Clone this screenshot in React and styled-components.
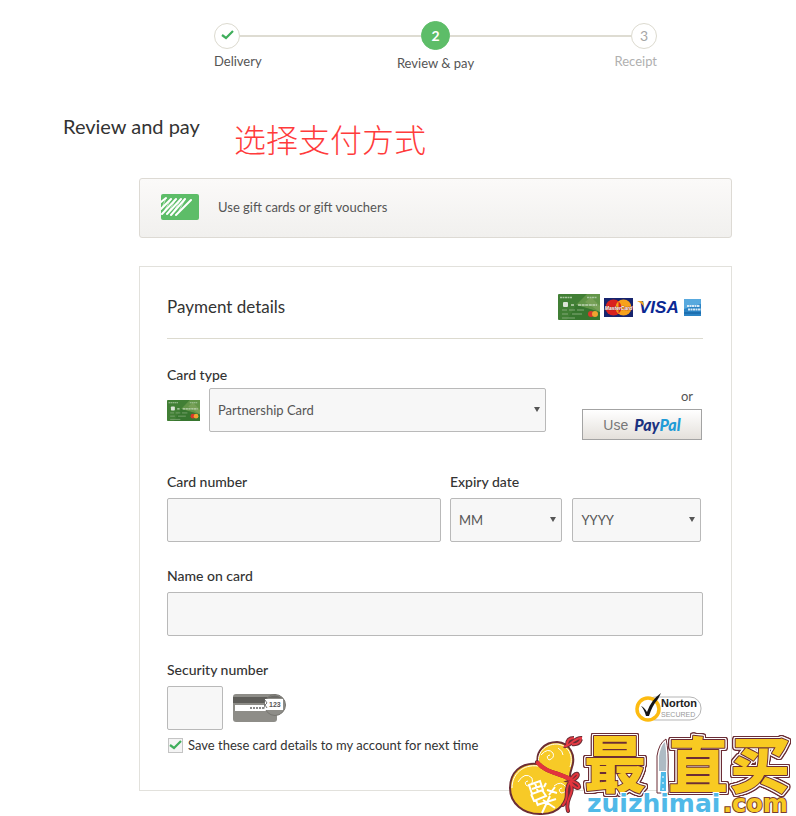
import { useState } from 'react';
import styled, { createGlobalStyle } from 'styled-components';

const GlobalStyle = createGlobalStyle`
    * {
        box-sizing: border-box;
    }
    body {
        margin: 0;
        background: #fff;
        color: #333;
        font-family: Lato, 'Noto Sans CJK SC', sans-serif;
        font-size: 13px;
        line-height: 20px;
    }
`;

const Page = styled.div`
    position: relative;
    padding: 21px 64px 25px 63px;
    overflow: hidden;
`;

const Column = styled.div`
    margin-left: 76px;
`;

const Progress = styled.nav`
    padding: 0 75px;
`;

const Track = styled.div`
    display: flex;
    align-items: center;
`;

const Line = styled.span`
    flex: 1;
    height: 2px;
    background: #dedcd2;
`;

const StepCircle = styled.span`
    display: flex;
    align-items: center;
    justify-content: center;
    width: ${(props) => (props.$active ? '29px' : '26px')};
    height: ${(props) => (props.$active ? '29px' : '26px')};
    border: 1px solid ${(props) => (props.$active ? '#5dbd68' : '#dcdacf')};
    border-radius: 50%;
    background: ${(props) => (props.$active ? '#5dbd68' : '#fff')};
    color: ${(props) => (props.$active ? '#fff' : '#a6a6a6')};
    font-size: 14px;
    font-weight: ${(props) => (props.$active ? 700 : 400)};
`;

const StepLabels = styled.ol`
    display: grid;
    grid-template-columns: 1fr auto 1fr;
    margin: 1px 0 0;
    padding: 0;
    list-style: none;
    color: #555;
`;

const StepLabel = styled.li`
    text-align: ${(props) => props.$align};
    padding-top: ${(props) => (props.$active ? '2px' : '0')};
    color: ${(props) => (props.$muted ? '#b0b0b0' : '#555')};
`;

const TitleRow = styled.div`
    display: flex;
    align-items: flex-start;
    gap: 34px;
    margin: 38px 0 16px;
`;

const Title = styled.h1`
    margin: 0;
    font-size: 20px;
    font-weight: 400;
    line-height: 30px;
`;

const Note = styled.p`
    margin: 3px 0 0;
    color: #ff3b3b;
    font-family: 'Noto Sans CJK SC', sans-serif;
    font-size: 32px;
    font-weight: 300;
    line-height: 48px;
`;

const GiftButton = styled.button`
    display: flex;
    align-items: center;
    gap: 19px;
    width: 100%;
    height: 60px;
    padding: 0 21px 2px;
    border: 1px solid #dddad4;
    border-radius: 3px;
    background: linear-gradient(#fbfaf9, #f1f0ee);
    color: #555;
    font: inherit;
    text-align: left;
    cursor: pointer;
`;

const Panel = styled.form`
    margin-top: 28px;
    padding: 0 28px 35px 27px;
    border: 1px solid #e2e1dc;
`;

const PanelHeader = styled.header`
    display: flex;
    align-items: center;
    justify-content: space-between;
    height: 72px;
    padding: 9px 2px 0 0;
    border-bottom: 1px solid #dcdacf;
`;

const PanelTitle = styled.h2`
    margin: 0;
    font-size: 17px;
    font-weight: 400;
`;

const Logos = styled.div`
    display: flex;
    align-items: center;
    gap: 4px;
`;

const FormRow = styled.div`
    display: flex;
    align-items: flex-start;
    gap: 9px;
    margin-top: ${(props) => props.$top || '24px'};
    padding-right: ${(props) => props.$right || '0'};
`;

const Field = styled.div`
    flex: ${(props) => props.$grow || 1};
    min-width: 0;
`;

const Label = styled.label`
    display: block;
    margin-bottom: ${(props) => props.$gap || '6px'};
    font-size: 14px;
    font-weight: 500;
    color: #333;
`;

const Controls = styled.div`
    display: flex;
    align-items: center;
    gap: ${(props) => props.$gap || '10px'};
`;

const TextInput = styled.input`
    display: block;
    width: ${(props) => props.$width || '100%'};
    height: 44px;
    padding: 0 8px;
    border: 1px solid #b9b9b9;
    border-radius: 2px;
    background: #f7f7f7;
    color: #555;
    font: inherit;
`;

const SelectBox = styled.div`
    position: relative;
    flex: ${(props) => props.$grow || 1};
    &::after {
        content: '';
        position: absolute;
        top: 19px;
        right: 6px;
        border: 3px solid transparent;
        border-top: 5px solid #555;
        border-bottom: 0;
        pointer-events: none;
    }
`;

const Select = styled.select`
    display: block;
    appearance: none;
    width: 100%;
    height: 44px;
    padding: 0 8px;
    border: 1px solid #b9b9b9;
    border-radius: 2px;
    background: #f7f7f7;
    color: #555;
    font: inherit;
`;

const PayPalColumn = styled.div`
    display: flex;
    flex-direction: column;
    align-items: flex-end;
    gap: 3px;
    margin-left: 27px;
    padding: 21px 1px 0 0;
    color: #555;
`;

const OrText = styled.span`
    padding-right: 9px;
`;

const PayPalButton = styled.button`
    display: flex;
    align-items: center;
    justify-content: center;
    gap: 6px;
    width: 120px;
    height: 31px;
    padding: 0;
    border: 1px solid #a3a3a3;
    background: linear-gradient(#fff, #e4e0db);
    color: #777;
    font-family: 'Liberation Sans', sans-serif;
    font-size: 14px;
    cursor: pointer;
`;

const PayPalName = styled.span`
    color: ${(props) => props.$color};
    font-family: Lato, sans-serif;
    font-size: 16px;
    font-style: italic;
    font-weight: 900;
`;

const BadgeSlot = styled.span`
    display: flex;
    margin-left: auto;
`;

const SaveRow = styled.label`
    display: flex;
    align-items: center;
    gap: 5px;
    margin-top: 5px;
    padding-left: 1px;
`;

const CheckSlot = styled.span`
    display: grid;
    width: 15px;
    height: 15px;
    & > * {
        grid-area: 1 / 1;
        margin: 0;
    }
    & > svg {
        pointer-events: none;
    }
    input:not(:checked) + svg {
        display: none;
    }
`;

const Checkbox = styled.input`
    appearance: none;
    width: 15px;
    height: 15px;
    border: 1px solid #c4c4c4;
    background: #f4f4f4;
`;

const Watermark = styled.div`
    position: absolute;
    right: 0;
    bottom: 0;
    display: flex;
    pointer-events: none;
    & > svg {
        overflow: visible;
    }
`;

const BrandText = styled.text`
    fill: #f8ca22;
    stroke: #6b2d35;
    stroke-width: 2px;
    stroke-linejoin: round;
    paint-order: stroke;
    font-family: 'Noto Sans CJK SC', sans-serif;
    font-size: ${(props) => props.$size};
    font-weight: 900;
    filter: drop-shadow(1px 0 #fff) drop-shadow(-1px 0 #fff) drop-shadow(0 1px #fff) drop-shadow(0 -1px #fff)
        drop-shadow(1px 0 #6b2d35) drop-shadow(-1px 0 #6b2d35) drop-shadow(0 1px #6b2d35)
        drop-shadow(0 -1px #6b2d35);
`;

const DomainText = styled.text`
    fill: ${(props) => props.$fill};
    stroke: ${(props) => props.$outline};
    stroke-width: 2px;
    paint-order: stroke;
    font-family: 'DejaVu Sans', sans-serif;
    font-size: ${(props) => props.$size};
    font-weight: 700;
`;

function CheckIcon({ size = 15, color = '#3fae5b' }) {
    return (
        <svg width={size} height={size} viewBox="0 0 15 15" fill="none">
            <path d="M2 7 L6 10 L13 3" stroke={color} strokeWidth="2.200" />
        </svg>
    );
}

function GiftIcon() {
    return (
        <svg width="38" height="26" viewBox="0 0 38 26">
            <rect width="38" height="26" rx="2" fill="#5dbd68" />
            <path
                d="M0 8 L5 4 M0 15 L10 5 M1 20 L15 5 M6 20 L20 5 M10 21 L24 5 M15 21 L30 6"
                stroke="#fff"
                strokeWidth="2"
                strokeLinecap="round"
                fill="none"
            />
            <path d="M5 4 L1 14 M10 5 L4 16 M15 5 L8 17 M20 5 L13 17 M24 5 L18 17" stroke="#fff" strokeWidth=".6" />
        </svg>
    );
}

function PartnershipCard({ width, height }) {
    return (
        <svg width={width} height={height} viewBox="0 0 42 26" preserveAspectRatio="none">
            <rect width="42" height="26" rx="1" fill="#417f35" />
            <path d="M18 11 L29 0 H42 V18 Z" fill="#629548" />
            <path d="M18 11 L42 18 V26 H9 Z" fill="#37762f" />
            <path d="M27 8 L33 3 L42 12 V18 Z" fill="#77a057" />
            <path d="M2 3.500 H14 M29 3.500 H39" stroke="#a9c79f" strokeWidth="1.300" strokeDasharray="2 .5" />
            <rect x="5" y="8" width="5" height="5" rx="1" fill="#dce4d8" />
            <path d="M13 11 H16 M20 11 H39" stroke="#c0d5b7" strokeWidth="1.500" strokeDasharray="3 .6" />
            <path d="M4 16 H9 M11 16 H17 M19 16 H26 M4 20 H10 M14 20 H24 M4 24 H17" stroke="#83a979" />
            <circle cx="33" cy="20" r="3" fill="#d8372c" />
            <circle cx="37" cy="20" r="3" fill="#f0a331" />
        </svg>
    );
}

function MasterCard() {
    return (
        <svg width="29" height="19" viewBox="0 0 29 19">
            <rect width="29" height="19" fill="#17246e" />
            <circle cx="9.500" cy="9.500" r="8" fill="#d9221f" />
            <circle cx="19.500" cy="9.500" r="8" fill="#f7a11b" />
            <path d="M14.500 3.300 A8 8 0 0 1 14.500 15.700" fill="#d9221f" />
            <text
                x="14.500"
                y="11.500"
                textAnchor="middle"
                fill="#fff"
                stroke="#8a1f1f"
                strokeWidth=".5"
                paintOrder="stroke"
                fontFamily="Liberation Sans, sans-serif"
                fontSize="5"
                fontStyle="italic"
                fontWeight="700"
            >
                MasterCard
            </text>
        </svg>
    );
}

function Visa() {
    return (
        <svg width="43" height="20" viewBox="0 0 43 20">
            <text
                x="2"
                y="16"
                fill="#0a2893"
                fontFamily="Liberation Sans, sans-serif"
                fontSize="17"
                fontStyle="italic"
                fontWeight="700"
            >
                VISA
            </text>
            <path d="M0 4 H4 Q6 4 6.500 6 L7 10 Q5 6 0 4 Z" fill="#f5a623" />
        </svg>
    );
}

function Amex() {
    return (
        <svg width="17" height="17" viewBox="0 0 17 17">
            <rect width="17" height="17" fill="#2b83c4" />
            <path d="M0 0 H17 V5 Q8 7 0 10 Z" fill="#58a9de" />
            <path d="M3 7 H16 M4 10.500 H17" stroke="#d6e9f6" strokeWidth="2" strokeDasharray="2 .5" />
            <path d="M0 14 H17" stroke="#1d6fb0" strokeWidth="2" />
        </svg>
    );
}

function SecurityCard() {
    return (
        <svg width="53" height="28" viewBox="0 0 53 28">
            <rect width="44" height="28" rx="3" fill="#8e8d88" />
            <path d="M0 3 H44 V9 H0 Z" fill="#5f5e5a" />
            <rect x="2" y="11" width="32" height="6" fill="#fff" />
            <path d="M17 14 H31" stroke="#666" strokeWidth="1.500" strokeDasharray="2 1" />
            <circle cx="42" cy="11" r="10.500" fill="#8e8d88" stroke="#777671" />
            <path d="M34 4 Q42 -1 49 4 Z" fill="#6b6a66" />
            <rect x="32" y="5" width="18" height="11" fill="#fff" />
            <text x="36" y="13" fill="#555" fontFamily="Liberation Sans, sans-serif" fontSize="7" fontWeight="700">
                123
            </text>
            <path d="M32 6 L34 9 L32 11 L34 14" stroke="#777" fill="none" />
        </svg>
    );
}

function NortonBadge() {
    return (
        <svg width="68" height="30" viewBox="0 0 68 30">
            <rect x="9" y="4" width="57" height="23" rx="11" fill="#fff" stroke="#b5b5b5" />
            <circle cx="13" cy="16" r="11" fill="#fff" stroke="#fdbb11" strokeWidth="3.500" />
            <path d="M6 13 Q9 14 12 19 Q16 7 26 0 L23 6 Q17 13 14 23 H11 Q9 16 6 13 Z" fill="#161616" />
            <text x="26" y="14" fill="#222" fontFamily="Liberation Sans, sans-serif" fontSize="11" fontWeight="700">
                Norton
            </text>
            <text x="26" y="24" fill="#999" fontFamily="Liberation Sans, sans-serif" fontSize="7">
                SECURED
            </text>
        </svg>
    );
}

function SiteLogo() {
    return (
        <svg width="290" height="83" viewBox="0 0 290 83">
            <path
                d="M32 31 C29 18 39 9 51 9 C64 10 70 22 66 34 C64 40 63 43 64 48 C65 67 53 81 36 81 C17 82 4 70 4 55 C4 40 14 29 32 31 Z"
                fill="#f7ca27"
                stroke="#6b2d35"
                strokeWidth="2"
            />
            <path
                d="M33 32 C30 20 39 11 51 11 C62 12 68 22 64 34 M32 33 C17 31 6 41 6 55"
                stroke="#fff"
                fill="none"
            />
            <path
                d="M35 22 Q42 14 47 20 Q49 25 43 27 Q39 23 44 22 M52 15 Q57 18 57 22 M12 49 Q19 38 26 45 Q28 52 21 53 Q17 49 22 48 M48 53 Q55 47 60 54 Q61 60 55 60 Q51 56 56 55"
                stroke="#fff"
                fill="none"
            />
            <path
                d="M58 13 C63 15 68 4 76 5 M61 12 Q61 5 68 5 M66 11 Q73 12 75 6"
                stroke="#6b2d35"
                strokeWidth="4"
                fill="none"
            />
            <path
                d="M58 13 C63 15 68 4 76 5 M61 12 Q61 5 68 5 M66 11 Q73 12 75 6"
                stroke="#e73b45"
                strokeWidth="2"
                fill="none"
            />
            <path
                d="M31 29 C39 39 50 39 64 46 M65 46 C72 35 76 44 65 48 C77 50 75 62 64 49 C57 58 65 63 57 72 M64 49 C70 62 58 65 62 78"
                stroke="#6b2d35"
                strokeWidth="4"
                strokeLinecap="round"
                fill="none"
            />
            <path
                d="M31 29 C39 39 50 39 64 46 M65 46 C72 35 76 44 65 48 C77 50 75 62 64 49 C57 58 65 63 57 72 M64 49 C70 62 58 65 62 78"
                stroke="#e3343d"
                strokeWidth="2"
                strokeLinecap="round"
                fill="none"
            />
            <path d="M31 29 C39 39 50 39 64 46" stroke="#e3343d" strokeWidth="4" fill="none" />
            <path
                d="M23 52 L34 48 L37 57 L26 61 Z M26 56 L35 53 M29 50 L32 59 M25 61 L28 68 L40 63 L36 57 M40 50 L38 54 M41 57 L51 60 M43 62 L49 54 M31 72 L50 66 M44 63 L36 80 M37 67 L49 75 M30 67 L32 73"
                stroke="#fff"
                strokeWidth="2"
                fill="none"
            />
            <BrandText x="78" y="55" $size="62px">最</BrandText>
            <BrandText x="162" y="55" $size="60px">直</BrandText>
            <BrandText x="224" y="55" $size="60px">买</BrandText>
            <path d="M151 60 V23 Q153 10 160 6 Q163 18 162 39 L163 60 Z" fill="#fff" stroke="#6b2d35" strokeWidth="1" />
            <path d="M153 38 V23 Q155 12 159 9 Q161 22 160 38 Z" fill="#aebbc4" />
            <path d="M155 39 H160 V58 H154 Z" fill="#4db9e8" />
            <path d="M157 43 V45 M157 49 V51 M157 55 V57" stroke="#fff" />
            <DomainText x="81" y="79" $size="25px" $fill="#50b9e8" $outline="#fff">zuizhimai</DomainText>
            <DomainText x="217" y="79" $size="24px" $fill="#f8ca22" $outline="#7a3b30">.com</DomainText>
        </svg>
    );
}

export function ReviewAndPay() {
    const [saveCard, setSaveCard] = useState(true);

    const handleSaveChange = (event) => {
        setSaveCard(event.target.checked);
    };

    const handleSubmit = (event) => {
        event.preventDefault();
    };

    return (
        <Page>
            <GlobalStyle />
            <Column>
                <Progress aria-label="Checkout progress">
                    <Track>
                        <StepCircle>
                            <CheckIcon />
                        </StepCircle>
                        <Line />
                        <StepCircle $active>2</StepCircle>
                        <Line />
                        <StepCircle>3</StepCircle>
                    </Track>
                    <StepLabels>
                        <StepLabel $align="left">Delivery</StepLabel>
                        <StepLabel $align="center" $active aria-current="step">Review &amp; pay</StepLabel>
                        <StepLabel $align="right" $muted>Receipt</StepLabel>
                    </StepLabels>
                </Progress>
            </Column>

            <TitleRow>
                <Title>Review and pay</Title>
                <Note lang="zh">选择支付方式</Note>
            </TitleRow>

            <Column>
                <GiftButton type="button">
                    <GiftIcon />
                    Use gift cards or gift vouchers
                </GiftButton>

                <Panel onSubmit={handleSubmit}>
                    <PanelHeader>
                        <PanelTitle>Payment details</PanelTitle>
                        <Logos>
                            <PartnershipCard width={42} height={26} />
                            <MasterCard />
                            <Visa />
                            <Amex />
                        </Logos>
                    </PanelHeader>

                    <FormRow $top="26px">
                        <Field>
                            <Label htmlFor="cardType" $gap="3px">Card type</Label>
                            <Controls $gap="9px">
                                <PartnershipCard width={33} height={21} />
                                <SelectBox>
                                    <Select id="cardType">
                                        <option>Partnership Card</option>
                                    </Select>
                                </SelectBox>
                            </Controls>
                        </Field>
                        <PayPalColumn>
                            <OrText>or</OrText>
                            <PayPalButton type="button">
                                Use
                                <span>
                                    <PayPalName $color="#1b3280">Pay</PayPalName>
                                    <PayPalName $color="#219bd7">Pal</PayPalName>
                                </span>
                            </PayPalButton>
                        </PayPalColumn>
                    </FormRow>

                    <FormRow $top="32px" $right="2px">
                        <Field $grow={12}>
                            <Label htmlFor="cardNumber">Card number</Label>
                            <TextInput type="text" id="cardNumber" />
                        </Field>
                        <Field $grow={11}>
                            <Label htmlFor="expiryMonth">Expiry date</Label>
                            <Controls>
                                <SelectBox $grow={7}>
                                    <Select id="expiryMonth">
                                        <option>MM</option>
                                    </Select>
                                </SelectBox>
                                <SelectBox $grow={8}>
                                    <Select aria-label="Expiry year">
                                        <option>YYYY</option>
                                    </Select>
                                </SelectBox>
                            </Controls>
                        </Field>
                    </FormRow>

                    <FormRow>
                        <Field>
                            <Label htmlFor="cardName">Name on card</Label>
                            <TextInput type="text" id="cardName" />
                        </Field>
                    </FormRow>

                    <FormRow>
                        <Field>
                            <Label htmlFor="securityNumber">Security number</Label>
                            <Controls>
                                <TextInput type="text" id="securityNumber" $width="56px" />
                                <SecurityCard />
                                <BadgeSlot>
                                    <NortonBadge />
                                </BadgeSlot>
                            </Controls>
                        </Field>
                    </FormRow>

                    <SaveRow>
                        <CheckSlot>
                            <Checkbox type="checkbox" checked={saveCard} onChange={handleSaveChange} />
                            <CheckIcon />
                        </CheckSlot>
                        Save these card details to my account for next time
                    </SaveRow>
                </Panel>
            </Column>

            <Watermark>
                <SiteLogo />
            </Watermark>
        </Page>
    );
}

export default ReviewAndPay;
